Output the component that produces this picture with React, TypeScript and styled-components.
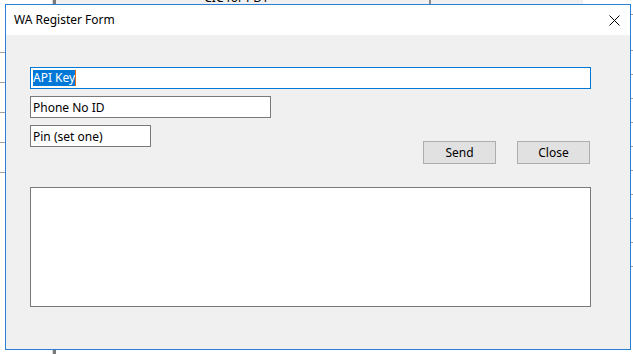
import styled, { createGlobalStyle } from "styled-components";

const GlobalStyle = createGlobalStyle`
  html, body {
    margin: 0;
    padding: 0;
    background: #ffffff;
  }
  body {
    font-family: "Noto Sans", "Liberation Sans", sans-serif;
  }
`;

// the app that sits behind the dialog
const Desktop = styled.div`
  position: relative;
  width: 633px;
  height: 354px;
  overflow: hidden;
  display: grid;
  grid-template-columns: 52px 1px 3px 1fr 2px;
  background: #ffffff;
`;

const RowLines = styled.div<{ $offset: number; $step: number; $height: number }>`
  height: ${(p) => p.$height}px;
  background-image: repeating-linear-gradient(
    to bottom,
    transparent 0,
    transparent ${(p) => p.$step - 1}px,
    #a0a0a0 ${(p) => p.$step - 1}px,
    #a0a0a0 ${(p) => p.$step}px
  );
  background-position: 0 ${(p) => p.$offset}px;
`;

const Divider = styled.div<{ $color: string }>`
  background: ${(p) => p.$color};
`;

const Grid = styled.div`
  display: flex;
  flex-direction: column;
`;

const HeaderRow = styled.div`
  display: grid;
  grid-template-columns: 373px 2px 152px;
  height: 22px;
`;

const HeaderCell = styled.div`
  background: #f0f0f0;
  font-size: 12px;
  line-height: 12px;
  color: #000;
  text-align: center;
  padding-right: 12px;
  margin-top: -8px;
  padding-top: 0;
  white-space: nowrap;
  overflow: visible;
  & + & {
    margin-top: 0;
  }
`;

// the dialog window
const Window = styled.div`
  position: absolute;
  left: 5px;
  top: 4px;
  width: 624px;
  height: 344px;
  border: 1px solid #2b80d3;
  background: #f0f0f0;
  display: flex;
  flex-direction: column;
`;

const TitleBar = styled.div`
  height: 30px;
  background: #ffffff;
  display: flex;
  align-items: center;
  justify-content: space-between;
  padding: 0 10px 0 8px;
`;

const Title = styled.span`
  font-size: 12px;
  color: #000;
  margin-top: -1px;
`;

const CloseIcon = () => (
  <svg width="11" height="11" viewBox="0 0 11 11">
    <path d="M0.5 0.5 L10.5 10.5 M10.5 0.5 L0.5 10.5" stroke="#000" strokeWidth="1" />
  </svg>
);

const Body = styled.div`
  flex: 1;
  padding: 32px 38px 0 24px;
  display: flex;
  flex-direction: column;
  gap: 7px;
`;

const Field = styled.div<{ $width: number; $focused?: boolean }>`
  box-sizing: border-box;
  width: ${(p) => p.$width}px;
  height: 22px;
  background: #ffffff;
  border: 1px solid ${(p) => (p.$focused ? "#0078d7" : "#7a7a7a")};
  display: flex;
  align-items: center;
  padding-left: 2px;
  font-size: 12px;
  color: #000;
  white-space: nowrap;
`;

const Selected = styled.span`
  background: #0078d7;
  color: #ffffff;
  line-height: 16px;
  border-right: 1px solid #e07020;
`;

const Row = styled.div`
  display: flex;
  align-items: flex-start;
  justify-content: space-between;
`;

const Buttons = styled.div`
  display: flex;
  gap: 21px;
  margin: 16px 2px 0 0;
`;

const Button = styled.button`
  box-sizing: border-box;
  width: 73px;
  height: 23px;
  background: #e1e1e1;
  border: 1px solid #adadad;
  font-family: inherit;
  font-size: 12px;
  color: #000;
  padding: 0;
`;

const Log = styled.div`
  box-sizing: border-box;
  width: 561px;
  height: 120px;
  margin-top: 16px;
  background: #ffffff;
  border: 1px solid #7a7a7a;
`;

export default function App() {
  return (
    <>
      <GlobalStyle />
      <Desktop>
        <RowLines $offset={23} $step={30} $height={176} />
        <Divider $color="#d8d8d8" />
        <Divider $color="#7a7a7a" />
        <Grid>
          <HeaderRow>
            <HeaderCell>CIC for PDY</HeaderCell>
            <Divider $color="#8a8a8a" />
            <HeaderCell />
          </HeaderRow>
        </Grid>
        <RowLines $offset={27} $step={24} $height={276} />
        <Window>
          <TitleBar>
            <Title>WA Register Form</Title>
            <CloseIcon />
          </TitleBar>
          <Body>
            <Field $width={561} $focused>
              <Selected>API Key</Selected>
            </Field>
            <Field $width={241}>Phone No ID</Field>
            <Row>
              <Field $width={121}>Pin (set one)</Field>
              <Buttons>
                <Button>Send</Button>
                <Button>Close</Button>
              </Buttons>
            </Row>
            <Log />
          </Body>
        </Window>
      </Desktop>
    </>
  );
}
